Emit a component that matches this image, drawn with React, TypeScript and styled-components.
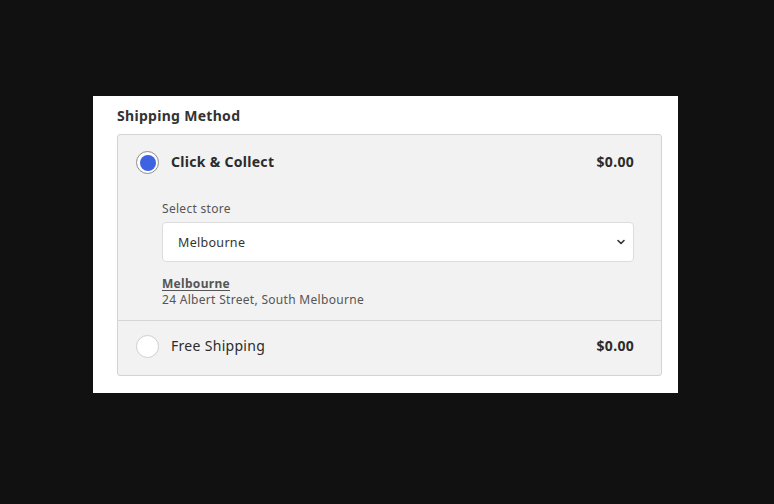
import React, { useState } from "react"
import styled, { createGlobalStyle } from "styled-components"
import { ChevronDown } from "lucide-react"

const GlobalStyle = createGlobalStyle`
  html, body {
    margin: 0;
    padding: 0;
    background: #111111;
  }
  body {
    font-family: "Noto Sans", "Open Sans", sans-serif;
  }
`

const Page = styled.div`
  box-sizing: border-box;
  min-height: 504px;
  padding: 96px 0 0 93px;
  display: flex;
  align-items: flex-start;
`

const Card = styled.section`
  box-sizing: border-box;
  width: 585px;
  height: 297px;
  background: #ffffff;
  padding: 10px 16px 0 24px;
`

const Title = styled.h2`
  margin: 0 0 9px;
  font-size: 14px;
  font-weight: 700;
  letter-spacing: 0.3px;
  line-height: 19px;
  color: #333333;
`

const Panel = styled.div`
  border: 1px solid #d3d3d3;
  border-radius: 3px;
  background: #f2f2f2;
  overflow: hidden;
`

const Option = styled.div<{ $last?: boolean }>`
  padding: ${({ $last }) => ($last ? "14px 27px 17px 18px" : "16px 27px 12px 18px")};
  border-bottom: ${({ $last }) => ($last ? "none" : "1px solid #d6d6d6")};
`

const OptionHead = styled.label`
  display: flex;
  align-items: center;
  gap: 12px;
  cursor: pointer;
`

const Radio = styled.span<{ $checked?: boolean }>`
  box-sizing: border-box;
  flex: none;
  width: 23px;
  height: 23px;
  border-radius: 50%;
  background: #ffffff;
  border: 1px solid ${({ $checked }) => ($checked ? "#8c8c8c" : "#cfcfcf")};
  display: flex;
  align-items: center;
  justify-content: center;

  &::after {
    content: "";
    display: ${({ $checked }) => ($checked ? "block" : "none")};
    width: 16px;
    height: 16px;
    border-radius: 50%;
    background: #3d63e2;
  }
`

const OptionName = styled.span<{ $bold?: boolean }>`
  flex: 1;
  margin-top: -3px;
  font-size: 14px;
  letter-spacing: 0.3px;
  font-weight: ${({ $bold }) => ($bold ? 700 : 400)};
  color: #2b2b2b;
`

const Price = styled.span`
  margin-top: -3px;
  font-size: 14px;
  letter-spacing: 0.3px;
  font-weight: 700;
  color: #2b2b2b;
`

const Details = styled.div`
  padding: 27px 0 0 26px;
`

const FieldLabel = styled.div`
  font-size: 12px;
  letter-spacing: 0.3px;
  color: #555555;
  line-height: 16px;
  margin-bottom: 5px;
`

const SelectWrap = styled.div`
  position: relative;
`

const Select = styled.select`
  box-sizing: border-box;
  width: 100%;
  height: 40px;
  appearance: none;
  background: #ffffff;
  border: 1px solid #dcdcdc;
  border-radius: 4px;
  padding: 0 30px 0 15px;
  font-family: inherit;
  font-size: 12.5px;
  letter-spacing: 0.3px;
  color: #333333;
  outline: none;
`

const Chevron = styled(ChevronDown)`
  position: absolute;
  right: 7px;
  top: 50%;
  transform: translateY(-50%);
  color: #333333;
  pointer-events: none;
`

const StoreName = styled.div`
  margin-top: 14px;
  font-size: 12px;
  letter-spacing: 0.3px;
  font-weight: 700;
  color: #555555;
  text-decoration: underline;
  text-underline-offset: 2px;
  line-height: 16px;
`

const StoreAddress = styled.div`
  font-size: 12px;
  letter-spacing: 0.3px;
  color: #555555;
  line-height: 16px;
`

export default function App() {
  const [method, setMethod] = useState<"collect" | "free">("collect")
  const [store, setStore] = useState("Melbourne")

  return (
    <Page>
      <GlobalStyle />
      <Card>
        <Title>Shipping Method</Title>
        <Panel>
          <Option>
            <OptionHead onClick={() => setMethod("collect")}>
              <Radio $checked={method === "collect"} />
              <OptionName $bold>Click &amp; Collect</OptionName>
              <Price>$0.00</Price>
            </OptionHead>
            {method === "collect" && (
              <Details>
                <FieldLabel>Select store</FieldLabel>
                <SelectWrap>
                  <Select value={store} onChange={(e) => setStore(e.target.value)}>
                    <option>Melbourne</option>
                    <option>Sydney</option>
                    <option>Brisbane</option>
                  </Select>
                  <Chevron size={12} strokeWidth={3.2} />
                </SelectWrap>
                <StoreName>Melbourne</StoreName>
                <StoreAddress>24 Albert Street, South Melbourne</StoreAddress>
              </Details>
            )}
          </Option>
          <Option $last>
            <OptionHead onClick={() => setMethod("free")}>
              <Radio $checked={method === "free"} />
              <OptionName>Free Shipping</OptionName>
              <Price>$0.00</Price>
            </OptionHead>
          </Option>
        </Panel>
      </Card>
    </Page>
  )
}
